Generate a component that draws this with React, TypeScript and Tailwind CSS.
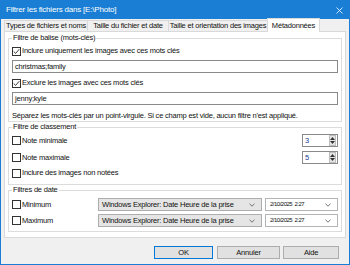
import { ReactNode } from "react";

function Box({ checked }: { checked?: boolean }) {
  return (
    <span className="flex h-[9px] w-[9px] shrink-0 items-center justify-center border border-[#333333] bg-white">
      {checked && (
        <svg width="7" height="7" viewBox="0 0 7 7">
          <path d="M0.7 3.5 L2.6 5.4 L6.3 1.2" fill="none" stroke="#222" strokeWidth="0.9" />
        </svg>
      )}
    </span>
  );
}

function CheckRow({ label, checked, className = "" }: { label: string; checked?: boolean; className?: string }) {
  return (
    <div className={`flex h-[12px] items-center gap-[1px] ${className}`}>
      <Box checked={checked} />
      <span className="whitespace-nowrap">{label}</span>
    </div>
  );
}

function Chevron() {
  return (
    <svg width="6" height="4" viewBox="0 0 6 4">
      <path d="M0.5 0.8 L3 3.2 L5.5 0.8" fill="none" stroke="#555" strokeWidth="0.8" />
    </svg>
  );
}

function Spin({ value }: { value: string }) {
  return (
    <div className="flex h-[13px] w-[36px] items-center border border-[#8a8a8a] bg-white pl-[2px] pr-px">
      <span className="flex-1 text-[#1a3e8c]">{value}</span>
      <div className="flex h-[11px] w-[7px] flex-col items-center justify-center gap-[1px] border border-[#bdbdbd] bg-[#e6e6e6]">
        <svg width="5" height="3" viewBox="0 0 5 3">
          <path d="M0 3 L2.5 0 L5 3 Z" fill="#333" />
        </svg>
        <svg width="5" height="3" viewBox="0 0 5 3">
          <path d="M0 0 L2.5 3 L5 0 Z" fill="#333" />
        </svg>
      </div>
    </div>
  );
}

function Group({ title, children, className = "" }: { title: string; children: ReactNode; className?: string }) {
  return (
    <fieldset className={`border border-[#dcdcdc] px-[3px] ${className}`}>
      <legend className="px-[1px] leading-[10px]">{title}</legend>
      {children}
    </fieldset>
  );
}

function DateRow({ label, className = "" }: { label: string; className?: string }) {
  return (
    <div className={`flex h-[13px] items-center ${className}`}>
      <div className="w-[86px]">
        <CheckRow label={label} />
      </div>
      <div className="flex h-[13px] w-[164px] items-center justify-between border border-[#adadad] bg-[#e5e5e5] pl-[3px] pr-[6px]">
        <span className="whitespace-nowrap">Windows Explorer: Date Heure de la prise</span>
        <Chevron />
      </div>
      <div className="ml-[3px] flex h-[13px] w-[73px] items-center border border-[#b4b4b4] bg-white pl-[4px] pr-[6px]">
        <span className="whitespace-nowrap text-[6px] tracking-[-0.5px]">2/10/2025&nbsp;&nbsp;2:27</span>
        <span className="flex-1" />
        <Chevron />
      </div>
    </div>
  );
}

const tabs = [
  { label: "Types de fichiers et noms", w: "w-[84px]" },
  { label: "Taille du fichier et date", w: "w-[82px]" },
  { label: "Taille et orientation des images", w: "w-[100px]" },
];

export default function App() {
  return (
    <div className="flex h-[265px] w-[350px] flex-col border border-[#1a7fd4] bg-[#f0f0f0] font-['Liberation_Sans',Arial,sans-serif] text-[7.5px] tracking-[-0.2px] text-[#111111]">
      <div className="flex h-[18px] shrink-0 items-center justify-between bg-[#1a7fd4] pl-[5px] pr-[6px] text-white">
        <span className="text-[8px]">{"Filtrer les fichiers dans [E:\\Photo]"}</span>
        <svg width="7" height="7" viewBox="0 0 7 7">
          <path d="M0.5 0.5 L6.5 6.5 M6.5 0.5 L0.5 6.5" stroke="white" strokeWidth="0.8" />
        </svg>
      </div>

      <div className="flex h-[12px] shrink-0 items-end pl-[3px]">
        {tabs.map((t, i) => (
          <div
            key={t.label}
            className={`flex h-[11px] ${t.w} items-center justify-center whitespace-nowrap border border-b-0 border-[#d9d9d9] bg-[#f0f0f0] ${i > 0 ? "-ml-px" : ""}`}
          >
            {t.label}
          </div>
        ))}
        <div className="relative z-10 -mb-px -ml-px flex h-[14px] w-[53px] items-center justify-center border border-b-0 border-[#d9d9d9] bg-white">
          Métadonnées
        </div>
      </div>

      <div className="mx-[3px] flex h-[207px] shrink-0 flex-col border border-[#d9d9d9] bg-white px-[3px] pt-[1px]">
        <Group title="Filtre de balise (mots-clés)">
          <CheckRow label="Inclure uniquement les images avec ces mots clés" checked className="mt-[2px]" />
          <div className="mt-[3px] flex h-[13px] items-center border border-[#8a8a8a] pl-[2px]">christmas;family</div>
          <CheckRow label="Exclure les images avec ces mots clés" checked className="mt-[4px]" />
          <div className="mt-[3px] flex h-[13px] items-center border border-[#8a8a8a] pl-[2px]">jenny;kyle</div>
          <div className="mt-[6px] whitespace-nowrap leading-[10px]">
            Séparez les mots-clés par un point-virgule. Si ce champ est vide, aucun filtre n'est appliqué.
          </div>
        </Group>

        <Group title="Filtre de classement" className="pb-[5px]">
          <div className="mt-[2px] flex h-[13px] items-center justify-between">
            <CheckRow label="Note minimale" />
            <Spin value="3" />
          </div>
          <div className="mt-[4px] flex h-[13px] items-center justify-between">
            <CheckRow label="Note maximale" />
            <Spin value="5" />
          </div>
          <CheckRow label="Inclure des images non notées" className="mt-[3px]" />
        </Group>

        <Group title="Filtres de date" className="pb-[4px]">
          <DateRow label="Minimum" className="mt-[3px]" />
          <DateRow label="Maximum" className="mt-[3px]" />
        </Group>
      </div>

      <div className="mt-[8px] flex h-[13px] shrink-0 justify-end pr-[10px]">
        <button className="flex h-[13px] w-[59px] items-center justify-center border border-[#0078d7] bg-[#e1e1e1]">OK</button>
        <button className="ml-[4px] flex h-[13px] w-[63px] items-center justify-center border border-[#adadad] bg-[#e1e1e1]">Annuler</button>
        <button className="ml-[3px] flex h-[13px] w-[56px] items-center justify-center border border-[#adadad] bg-[#e1e1e1]">Aide</button>
      </div>
    </div>
  );
}
